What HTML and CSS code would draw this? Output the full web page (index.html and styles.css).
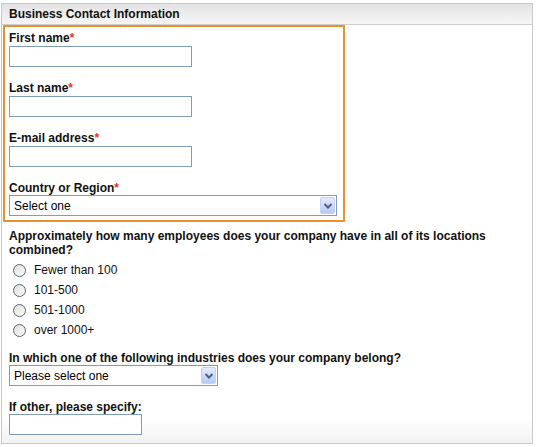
FILE: index.html
```html
<!DOCTYPE html>
<html lang="en">
<head>
    <meta charset="UTF-8">
    <title>Business Contact Information</title>
    <link rel="stylesheet" href="styles.css">
</head>
<body>

    <div class="panel">
        <div class="panel-head">Business Contact Information</div>

        <div class="required-box">
            <div class="field">
                <label for="firstName">First name<span class="req">*</span></label>
                <input type="text" id="firstName" class="text-input">
            </div>
            <div class="field">
                <label for="lastName">Last name<span class="req">*</span></label>
                <input type="text" id="lastName" class="text-input">
            </div>
            <div class="field">
                <label for="email">E-mail address<span class="req">*</span></label>
                <input type="text" id="email" class="text-input">
            </div>
            <div class="field last">
                <label for="country">Country or Region<span class="req">*</span></label>
                <div class="select-wrap country">
                    <select id="country">
                        <option>Select one</option>
                    </select>
                    <span class="select-btn"><svg width="16" height="17" viewBox="0 0 16 17"><path d="M4.5 7 L8 10.5 L11.5 7" fill="none" stroke="#4d6185" stroke-width="2"/></svg></span>
                </div>
            </div>
        </div>

        <div class="survey">
            <p class="question">Approximately how many employees does your company have in all of its locations combined?</p>
            <div class="radio-list">
                <label class="radio-row"><input type="radio" name="size"><span>Fewer than 100</span></label>
                <label class="radio-row"><input type="radio" name="size"><span>101-500</span></label>
                <label class="radio-row"><input type="radio" name="size"><span>501-1000</span></label>
                <label class="radio-row"><input type="radio" name="size"><span>over 1000+</span></label>
            </div>

            <p class="question industry">In which one of the following industries does your company belong?</p>
            <div class="select-wrap industry-select">
                <select>
                    <option>Please select one</option>
                </select>
                <span class="select-btn"><svg width="16" height="17" viewBox="0 0 16 17"><path d="M4.5 7 L8 10.5 L11.5 7" fill="none" stroke="#4d6185" stroke-width="2"/></svg></span>
            </div>

            <p class="question other">If other, please specify:</p>
            <input type="text" class="text-input other-input">
        </div>
    </div>

</body>
</html>
```

FILE: styles.css
```css
body {
    margin: 0;
    padding: 3px 0 0 1px;
    font-family: "Liberation Sans", Arial, sans-serif;
    font-size: 12px;
    color: #111;
    background-color: #fff;
}
.panel {
    width: 530px;
    border: 1px solid #c9c9c9;
    background: linear-gradient(to bottom, #fff calc(100% - 24px), #f2f2f2);
}
.panel-head {
    height: 20px;
    line-height: 21px;
    padding-left: 7px;
    font-weight: bold;
    border-bottom: 1px solid #cfcfcf;
    background: linear-gradient(to bottom, #e3e3e3, #f6f6f6);
}
.required-box {
    width: 334px;
    margin-left: 1px;
    padding: 3px 0 4px 4px;
    border: 2px solid #e8912e;
}
.field {
    margin-bottom: 13px;
}
.field.last {
    margin-bottom: 0;
}
.field label {
    display: block;
    font-weight: bold;
    line-height: 14px;
    padding-top: 1px;
    margin-bottom: 1px;
}
.field.last label {
    margin-bottom: 0;
}
.req {
    color: #e0362b;
}
.text-input {
    display: block;
    box-sizing: border-box;
    width: 183px;
    height: 21px;
    margin: 0;
    padding: 0 3px;
    border: 1px solid #7f9db9;
    font-family: inherit;
    font-size: 12px;
    background-color: #fff;
}
.select-wrap {
    position: relative;
    width: 328px;
    height: 21px;
}
.select-wrap select {
    box-sizing: border-box;
    width: 100%;
    height: 21px;
    margin: 0;
    padding: 0 0 0 4px;
    border: 1px solid #7f9db9;
    border-radius: 0;
    background-color: #fff;
    font-family: inherit;
    font-size: 12px;
    color: #000;
    appearance: none;
    -webkit-appearance: none;
}
.select-btn {
    position: absolute;
    top: 2px;
    right: 2px;
    width: 15px;
    height: 17px;
    box-sizing: border-box;
    border: 1px solid #c3d1f3;
    border-radius: 2px;
    background: linear-gradient(to bottom, #e3eafd, #b8c9f5);
    pointer-events: none;
}
.select-btn svg {
    display: block;
    margin: -1px 0 0 -1px;
}
.survey {
    padding: 7px 7px 8px 7px;
}
.question {
    margin: 0;
    font-weight: bold;
    line-height: 14px;
}
.radio-list {
    margin-top: 3px;
}
.radio-row {
    display: flex;
    align-items: center;
    height: 20px;
}
.radio-row input {
    appearance: none;
    -webkit-appearance: none;
    width: 13px;
    height: 13px;
    margin: 1px 8px 0 4px;
    border: 1px solid #56677a;
    border-radius: 50%;
    background: linear-gradient(135deg, #dcdcd8, #fff);
}
.question.industry {
    margin-top: 11px;
}
.industry-select {
    width: 209px;
}
.question.other {
    margin-top: 14px;
}
.other-input {
    width: 133px;
}
```
